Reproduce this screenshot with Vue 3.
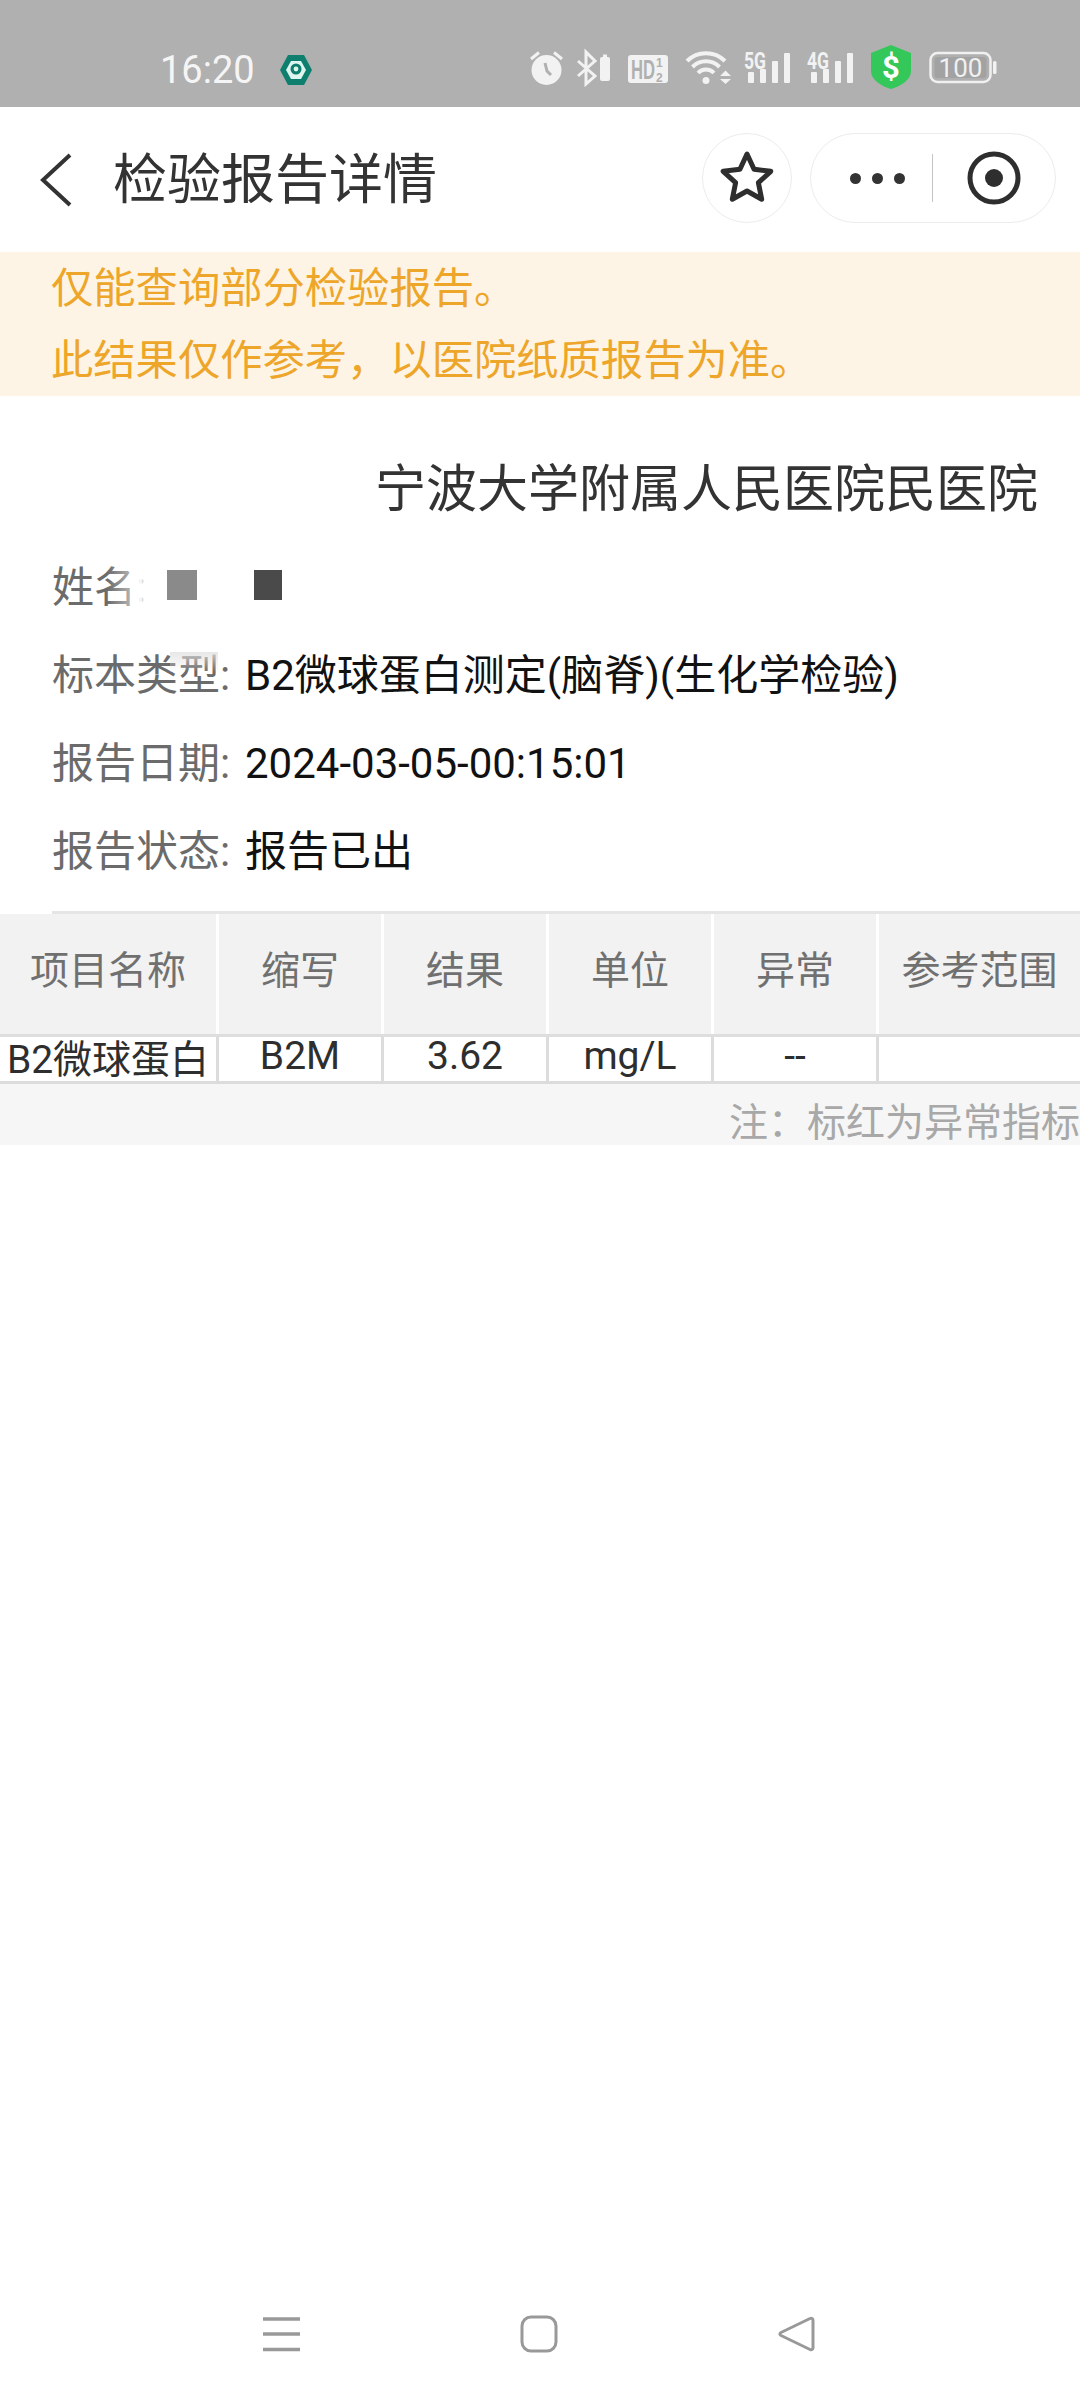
<script setup>
const columns = [
  { head: '项目名称', value: 'B2微球蛋白' },
  { head: '缩写', value: 'B2M' },
  { head: '结果', value: '3.62' },
  { head: '单位', value: 'mg/L' },
  { head: '异常', value: '--' },
  { head: '参考范围', value: '' }
]
</script>

<template>
  <div class="page">
    <header class="status">
      <span class="time">16:20</span>
      <svg class="hex" width="34" height="32" viewBox="0 0 34 32">
        <path d="M9 1H25L33 16L25 31H9L1 16Z" fill="#0e7f6e" />
        <path d="M12 7H22L27 16L22 25H12L7 16Z" fill="#dff5ef" />
        <circle cx="17" cy="15" r="5.5" fill="#0e7f6e" />
        <circle cx="17" cy="15" r="2.4" fill="#dff5ef" />
      </svg>
      <svg class="status-icons" width="470" height="60" viewBox="530 40 470 60">
        <g fill="#f2f2f2">
          <circle cx="546.5" cy="71" r="15" />
          <path d="M531 60L539 53.500M562 60L554 53.500" stroke="#f2f2f2" stroke-width="3" fill="none" />
          <path d="M545 64L547 72L551 76" stroke="#b0b0b0" stroke-width="3" fill="none" />
          <path d="M578 62L595 77L586 85V53L595 62L578 77" stroke="#f2f2f2" stroke-width="3" fill="none" />
          <rect x="600" y="58" width="10" height="24" rx="2" />
          <rect x="603" y="55.500" width="4" height="3" />
          <rect x="628" y="56" width="40" height="28" rx="3" />
          <circle cx="706" cy="81.500" r="3.500" />
          <path d="M698 74A11 11 0 0 1 714 74M692.500 68A19 19 0 0 1 719.500 68M687 62A27 27 0 0 1 725 62" stroke="#f2f2f2" stroke-width="4" fill="none" />
          <path d="M720 77L725.500 71.500L731 77ZM720 80H731L725.500 85Z" />
          <g>
            <rect x="748" y="73" width="6" height="11" rx="1" />
            <rect x="760" y="70" width="6" height="14" rx="1" />
            <rect x="772" y="62" width="6" height="22" rx="1" />
            <rect x="784" y="54" width="6" height="30" rx="1" />
            <rect x="811" y="73" width="6" height="11" rx="1" />
            <rect x="823" y="70" width="6" height="14" rx="1" />
            <rect x="835" y="62" width="6" height="22" rx="1" />
            <rect x="847" y="54" width="6" height="30" rx="1" />
          </g>
          <rect x="993" y="62" width="3.500" height="13" rx="1.500" />
        </g>
        <text class="t-hd" x="631" y="80" textLength="24" lengthAdjust="spacingAndGlyphs">HD</text>
        <text class="t-frac" x="656" y="68">1</text>
        <text class="t-frac" x="656" y="83">2</text>
        <text class="t-net" x="744" y="70" textLength="22" lengthAdjust="spacingAndGlyphs">5G</text>
        <text class="t-net" x="807" y="70" textLength="22" lengthAdjust="spacingAndGlyphs">4G</text>
        <path d="M891 46L911 54V72C911 81 901 87 891 90C881 87 871 81 871 72V54Z" fill="#34c759" />
        <text class="t-dollar" x="891" y="79" text-anchor="middle">$</text>
        <rect x="930.500" y="54" width="60" height="29" rx="7" fill="none" stroke="#f0f0f0" stroke-width="2.500" />
        <rect x="934.500" y="58" width="52" height="21" rx="3" fill="#a2a2a2" />
        <text class="t-batt" x="960.500" y="77.500" text-anchor="middle">100</text>
      </svg>
    </header>

    <nav class="nav">
      <svg class="back" width="34" height="54" viewBox="0 0 34 54">
        <path d="M31 2L4 27L31 52" fill="none" stroke="#333" stroke-width="4" />
      </svg>
      <h1 class="title">检验报告详情</h1>
      <div class="star-btn">
        <svg width="60" height="60" viewBox="-30 -30 60 60">
          <path d="M0-25L7.050-9.700L23.800-7.700L11.400 3.700L14.700 20.200L0 12L-14.700 20.200L-11.400 3.700L-23.800-7.700L-7.050-9.700Z" fill="none" stroke="#2e2e2e" stroke-width="5" stroke-linejoin="round" />
        </svg>
      </div>
      <div class="capsule">
        <div class="dots"><i></i><i></i><i></i></div>
        <span class="sep"></span>
        <svg width="56" height="56" viewBox="0 0 56 56">
          <circle cx="28" cy="28" r="24" fill="none" stroke="#2e2e2e" stroke-width="5" />
          <circle cx="28" cy="28" r="9" fill="#2e2e2e" />
        </svg>
      </div>
    </nav>

    <section class="notice">
      <p>仅能查询部分检验报告。</p>
      <p>此结果仅作参考，以医院纸质报告为准。</p>
    </section>

    <h2 class="hospital">宁波大学附属人民医院民医院</h2>

    <section class="info">
      <div class="row">
        <span class="label name-label">姓名<em>:</em><i class="fade fade-side"></i></span>
        <span class="mask mask-a"></span>
        <span class="mask mask-b"></span>
      </div>
      <div class="row">
        <span class="label">标本类型:<i class="fade fade-top"></i></span>
        <span class="value">B2微球蛋白测定(脑脊)(生化学检验)</span>
      </div>
      <div class="row">
        <span class="label">报告日期:</span>
        <span class="value">2024-03-05-00:15:01</span>
      </div>
      <div class="row">
        <span class="label">报告状态:</span>
        <span class="value">报告已出</span>
      </div>
    </section>

    <div class="rule"></div>

    <section class="table">
      <div class="tr th">
        <div v-for="c in columns" :key="c.head" class="cell">{{ c.head }}</div>
      </div>
      <div class="tr td">
        <div v-for="c in columns" :key="c.head" class="cell">{{ c.value }}</div>
      </div>
    </section>
    <div class="note"><span>注：标红为异常指标</span></div>

    <footer class="softkeys">
      <svg width="38" height="36" viewBox="0 0 38 36">
        <path d="M1 3H38M1 18H38M1 33.500H38" stroke="#999" stroke-width="3.500" />
      </svg>
      <svg width="38" height="38" viewBox="0 0 38 38">
        <rect x="2" y="2" width="34" height="34" rx="9" fill="none" stroke="#999" stroke-width="3" />
      </svg>
      <svg width="38" height="38" viewBox="0 0 38 38">
        <path d="M33 3.500C34.500 2.700 36 3.600 36 5.200V32.800C36 34.400 34.500 35.300 33 34.500L4 20.500C2.500 19.700 2.500 18.300 4 17.500Z" fill="none" stroke="#999" stroke-width="3" stroke-linejoin="round" />
      </svg>
    </footer>
  </div>
</template>

<style scoped>
.page {
  width: 1080px;
  height: 2400px;
  overflow: hidden;
  display: flex;
  flex-direction: column;
  background: #fff;
  font-family: Roboto, "Noto Sans CJK SC", sans-serif;
  color: #111;
}
.status {
  height: 107px;
  flex: none;
  display: flex;
  align-items: center;
  background: #b0b0b0;
  padding: 32px 80px 0 160px;
  box-sizing: border-box;
}
.time {
  font-size: 38px;
  line-height: 44px;
  color: #f5f5f5;
  width: 119px;
}
.hex { flex: none; margin-top: 0; }
.status-icons { flex: none; margin-left: auto; margin-top: -2px; }
.t-hd { font: 700 27px "Liberation Sans", sans-serif; fill: #b0b0b0; }
.t-frac { font: 700 12px "Liberation Sans", sans-serif; fill: #b0b0b0; }
.t-net { font: 700 23px Roboto, sans-serif; fill: #f2f2f2; }
.t-dollar { font: 700 31px Roboto, sans-serif; fill: #fff; }
.t-batt { font: 400 26px Roboto, sans-serif; fill: #f0f0f0; }

.nav {
  height: 145px;
  flex: none;
  display: flex;
  align-items: center;
  box-sizing: border-box;
  padding: 0 24px 0 39px;
}
.back { flex: none; }
.title {
  margin: 3px 0 0 40px;
  font-size: 54px;
  font-weight: 400;
  line-height: 70px;
  color: #333;
}
.star-btn {
  margin-left: auto;
  margin-bottom: 3px;
  width: 90px;
  height: 90px;
  box-sizing: border-box;
  border: 1px solid #ececec;
  border-radius: 50%;
  display: flex;
  align-items: center;
  justify-content: center;
}
.star-btn svg { margin-top: 2px; }
.capsule {
  margin-left: 18px;
  margin-bottom: 3px;
  width: 246px;
  height: 90px;
  box-sizing: border-box;
  border: 1px solid #ececec;
  border-radius: 45px;
  display: flex;
  align-items: center;
  padding-left: 39px;
}
.dots { display: flex; gap: 11px; }
.dots i {
  width: 11px;
  height: 11px;
  border-radius: 50%;
  background: #333;
}
.sep {
  width: 1px;
  height: 48px;
  background: #c4c4c4;
  margin: 0 33px 0 27px;
}

.notice {
  flex: none;
  background: #fef4e5;
  color: #eda62a;
  font-size: 42.300px;
}
.notice p {
  margin: 0;
  height: 72px;
  line-height: 74px;
  padding-left: 51px;
}

.hospital {
  margin: 44px 42px 0 0;
  height: 99px;
  line-height: 100px;
  text-align: right;
  font-size: 51px;
  font-weight: 400;
  color: #333;
  flex: none;
}

.info { flex: none; padding-left: 52px; }
.row {
  height: 88px;
  box-sizing: border-box;
  padding-top: 9px;
  display: flex;
  align-items: center;
  font-size: 42px;
  line-height: 60px;
}
.label {
  position: relative;
  width: 193px;
  flex: none;
  color: #6b6b6b;
}
.label em { font-style: normal; color: #ddd; }
.value { color: #111; }
.fade { position: absolute; display: block; }
.fade-side {
  left: 55px;
  top: 0;
  width: 35px;
  height: 60px;
  background: linear-gradient(90deg, rgba(255, 255, 255, 0), rgba(255, 255, 255, 0.7));
}
.fade-top {
  left: 118px;
  top: 6px;
  width: 48px;
  height: 20px;
  background: linear-gradient(180deg, rgba(225, 225, 225, 0.8), rgba(255, 255, 255, 0));
}
.name-label { width: 115px; }
.mask { height: 30px; flex: none; margin-top: -6px; }
.mask-a { width: 30px; background: #8a8a8a; }
.mask-b { width: 28px; background: #4a4a4a; margin-left: 57px; }

.rule {
  flex: none;
  height: 3px;
  margin: 20px 0 0 52px;
  background: #e5e5e5;
}

.table { flex: none; }
.tr { display: flex; }
.cell {
  flex: none;
  width: 165px;
  box-sizing: border-box;
  border-right: 3px solid;
  display: flex;
  align-items: center;
  justify-content: center;
  font-size: 39px;
  white-space: nowrap;
}
.cell:first-child { width: 219px; }
.cell:last-child { width: 201px; border-right: 0; }
.th {
  height: 123px;
  background: #f2f2f2;
  border-bottom: 3px solid #dedede;
  box-sizing: border-box;
}
.th .cell { border-right-color: #fff; color: #707070; padding-bottom: 14px; }
.td {
  height: 47px;
  border-bottom: 3px solid #dcdcdc;
  box-sizing: border-box;
}
.td .cell { border-right-color: #dcdcdc; color: #2e2e2e; padding-bottom: 7px; }

.note {
  flex: none;
  height: 61px;
  background: #f6f6f6;
  display: flex;
  justify-content: flex-end;
  overflow: hidden;
  font-size: 39px;
  line-height: 78px;
  color: #a8a8a8;
  white-space: nowrap;
}

.softkeys {
  margin-top: auto;
  height: 132px;
  flex: none;
  box-sizing: border-box;
  display: flex;
  align-items: center;
  justify-content: space-between;
  padding: 0 265px 0 262px;
}
</style>
